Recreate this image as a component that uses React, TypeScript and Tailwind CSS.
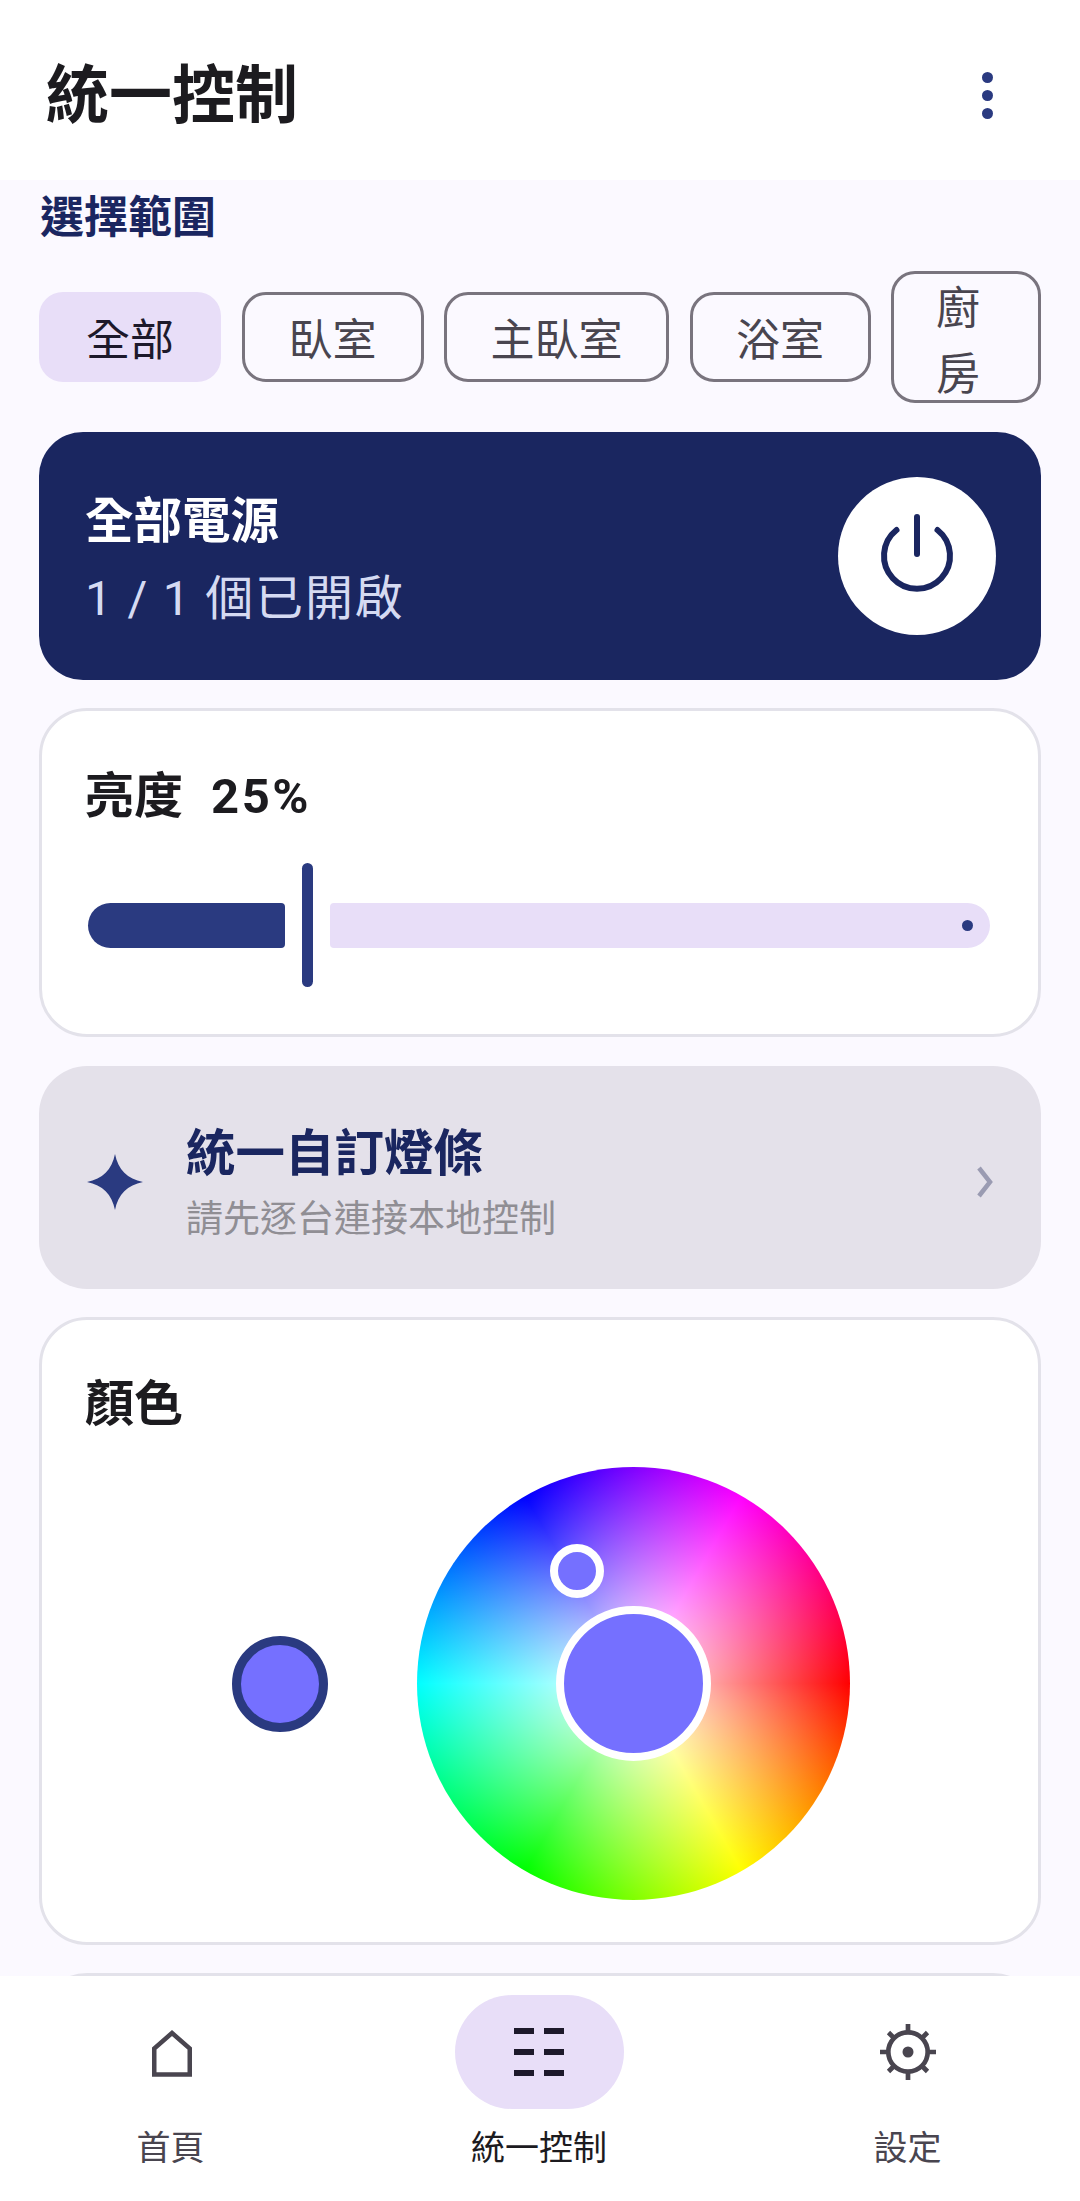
import type { ReactNode } from 'react'

const fontStack = 'font-[Roboto,"Noto_Sans_CJK_TC",sans-serif]'

const scopes = [
  { label: '全部', style: 'w-[182px] h-[90px] bg-[#e8def8] pt-[17px] text-center leading-[64px] text-[#1d192b]' },
  { label: '臥室', style: 'w-[182px] h-[90px] border-[3px] border-[#79747e] pt-[14px] text-center leading-[64px] text-[#49454f]' },
  { label: '主臥室', style: 'w-[225px] h-[90px] border-[3px] border-[#79747e] pt-[14px] text-center leading-[64px] text-[#49454f]' },
  { label: '浴室', style: 'w-[181px] h-[90px] border-[3px] border-[#79747e] pt-[14px] text-center leading-[64px] text-[#49454f]' },
  { label: '廚房', style: 'w-[150px] h-[132px] border-[3px] border-[#79747e] pt-[2px] pr-5 pl-[42px] text-left leading-[66px] text-[#49454f]' },
]

function PowerIcon() {
  return (
    <svg viewBox="0 0 80 90" className="h-[90px] w-[80px]" fill="none" stroke="#1a2660" strokeWidth="6" strokeLinecap="round">
      <path d="M40 6V43" />
      <path d="M19.5 19A33 33 0 1 0 60.5 19" />
    </svg>
  )
}

function SparkIcon() {
  return (
    <svg viewBox="0 0 56 56" className="mt-2 h-14 w-14" fill="#2a3a80">
      <path d="M28 0C31 15.500 40.500 25 56 28C40.500 31 31 40.500 28 56C25 40.500 15.500 31 0 28C15.500 25 25 15.500 28 0Z" />
    </svg>
  )
}

function HomeIcon() {
  return (
    <svg viewBox="0 0 40 47" className="mt-[3px] ml-[2px] h-[47px] w-10" fill="none" stroke="#49454f" strokeWidth="4.5">
      <path d="M20 3L37.750 18.500V44.500H2.250V18.500Z" strokeLinejoin="miter" />
    </svg>
  )
}

function GridIcon() {
  return (
    <svg viewBox="0 0 50 48" className="h-12 w-[50px]" fill="#1d192b">
      <rect x="0" y="0" width="20" height="6" />
      <rect x="30" y="0" width="20" height="6" />
      <rect x="0" y="21" width="20" height="6" />
      <rect x="30" y="21" width="20" height="6" />
      <rect x="0" y="42" width="20" height="6" />
      <rect x="30" y="42" width="20" height="6" />
    </svg>
  )
}

function GearIcon() {
  return (
    <svg viewBox="0 0 56 56" className="h-14 w-14" fill="none" stroke="#49454f" strokeWidth="4.7">
      <circle cx="28" cy="28" r="19.700" />
      <circle cx="28" cy="28" r="5.500" fill="#49454f" stroke="none" />
      <path d="M28 0v8M28 48v8M0 28h8M48 28h8M8.500 8.500l6 6M41.500 41.500l6 6M47.500 8.500l-6 6M14.500 41.500l-6 6" />
    </svg>
  )
}

function NavItem({ label, icon, active }: { label: string; icon: ReactNode; active?: boolean }) {
  return (
    <div className="flex w-[169px] flex-col items-center">
      <div className={`flex h-[114px] w-[169px] items-center justify-center rounded-[57px] ${active ? 'bg-[#e8def8]' : ''}`}>{icon}</div>
      <span className={`mt-[17px] text-[34px] leading-[44px] whitespace-nowrap ${active ? 'text-[#1c1b1f]' : 'text-[#49454f]'}`}>{label}</span>
    </div>
  )
}

export default function App() {
  return (
    <div className={`flex h-[2201px] w-[1080px] flex-col overflow-hidden bg-[#fbf9ff] ${fontStack}`}>
      <header className="flex h-[180px] shrink-0 items-center justify-between bg-white pt-[10px] pr-[87px] pl-[46px]">
        <h1 className="text-[63px] leading-none font-bold text-[#1c1b1f]">統一控制</h1>
        <div className="flex flex-col gap-[7px]">
          <span className="h-[11px] w-[11px] rounded-full bg-[#2a3a80]" />
          <span className="h-[11px] w-[11px] rounded-full bg-[#2a3a80]" />
          <span className="h-[11px] w-[11px] rounded-full bg-[#2a3a80]" />
        </div>
      </header>

      <main className="min-h-0 flex-1 overflow-hidden px-[39px]">
        <h2 className="mt-[13px] pl-px text-[44px] leading-[50px] font-bold text-[#1a2660]">選擇範圍</h2>

        <div className="mt-[28px] flex items-center justify-between">
          {scopes.map((scope) => (
            <div key={scope.label} className={`rounded-[24px] text-[44px] ${scope.style}`}>
              {scope.label}
            </div>
          ))}
        </div>

        <section className="mt-[29px] flex h-[248px] items-center justify-between rounded-[44px] bg-[#1a2660] pr-[45px] pl-[46px]">
          <div className="pt-[9px]">
            <p className="text-[48.5px] leading-[60px] font-bold text-white">全部電源</p>
            <p className="mt-[17px] text-[48px] leading-[60px] tracking-[1.8px] text-[#d5daf2]">1 / 1 個已開啟</p>
          </div>
          <div className="flex h-[158px] w-[158px] items-center justify-center rounded-full bg-white">
            <PowerIcon />
          </div>
        </section>

        <section className="mt-7 h-[329px] rounded-[48px] border-[3px] border-[#e3e2ea] bg-white px-[43px] pt-[56px]">
          <p className="text-[49px] leading-[60px] font-bold text-[#1c1b1f]">
            <span>亮度</span>
            <span className="ml-[28px] tracking-[2.5px]">25%</span>
          </p>
          <div className="mt-[36px] flex h-[124px] items-center pl-[3px]">
            <div className="h-[45px] w-[197px] rounded-l-[23px] rounded-r-[4px] bg-[#2a3a80]" />
            <div className="ml-[17px] h-[124px] w-[11px] rounded-full bg-[#2a3a80]" />
            <div className="ml-[17px] flex h-[45px] w-[660px] items-center justify-end rounded-l-[4px] rounded-r-[23px] bg-[#e8def8] pr-[17px]">
              <span className="h-[11px] w-[11px] rounded-full bg-[#2a3a80]" />
            </div>
          </div>
        </section>

        <section className="mt-[29px] flex h-[223px] items-center rounded-[48px] bg-[#e4e1ea] pr-[48px] pl-[48px]">
          <SparkIcon />
          <div className="ml-[43px] flex-1 pt-3">
            <p className="text-[49.5px] leading-[60px] font-bold text-[#1a2660]">統一自訂燈條</p>
            <p className="mt-3 text-[37px] leading-[48px] text-[#908e94]">請先逐台連接本地控制</p>
          </div>
          <svg viewBox="0 0 16 32" className="mt-2 h-8 w-4" fill="none" stroke="#9a9bb2" strokeWidth="4.5">
            <path d="M2 2l11 14L2 30" />
          </svg>
        </section>

        <section className="mt-[28px] h-[628px] rounded-[48px] border-[3px] border-[#e3e2ea] bg-white px-[43px] pt-[55px]">
          <p className="text-[49px] leading-[60px] font-bold text-[#1c1b1f]">顏色</p>
          <div className="mt-[32px] flex items-center">
            <span className="ml-[147px] h-[96px] w-[96px] rounded-full border-[9px] border-[#2a3a80] bg-[#7570ff]" />
            <div className="relative ml-[89px] h-[433px] w-[433px] rounded-full bg-[conic-gradient(from_90deg,#ff0000,#ffff00,#00ff00,#00ffff,#0000ff,#ff00ff,#ff0000)]">
              <div className="absolute inset-0 rounded-full bg-[radial-gradient(circle_closest-side,#ffffff_0%,rgba(255,255,255,0)_100%)]" />
              <span className="absolute top-[77px] left-[133px] h-[54px] w-[54px] rounded-full border-[8px] border-white bg-[#7570ff]" />
              <span className="absolute top-[139px] left-[139px] h-[155px] w-[155px] rounded-full border-[8px] border-white bg-[#7570ff]" />
            </div>
          </div>
        </section>

        <section className="mt-[28px] h-[200px] rounded-[48px] border-[3px] border-[#e3e2ea] bg-white" />
      </main>

      <nav className="flex h-[225px] shrink-0 justify-between bg-white pt-[19px] pr-[88px] pl-[86px]">
        <NavItem label="首頁" icon={<HomeIcon />} />
        <NavItem label="統一控制" icon={<GridIcon />} active />
        <NavItem label="設定" icon={<GearIcon />} />
      </nav>
    </div>
  )
}
